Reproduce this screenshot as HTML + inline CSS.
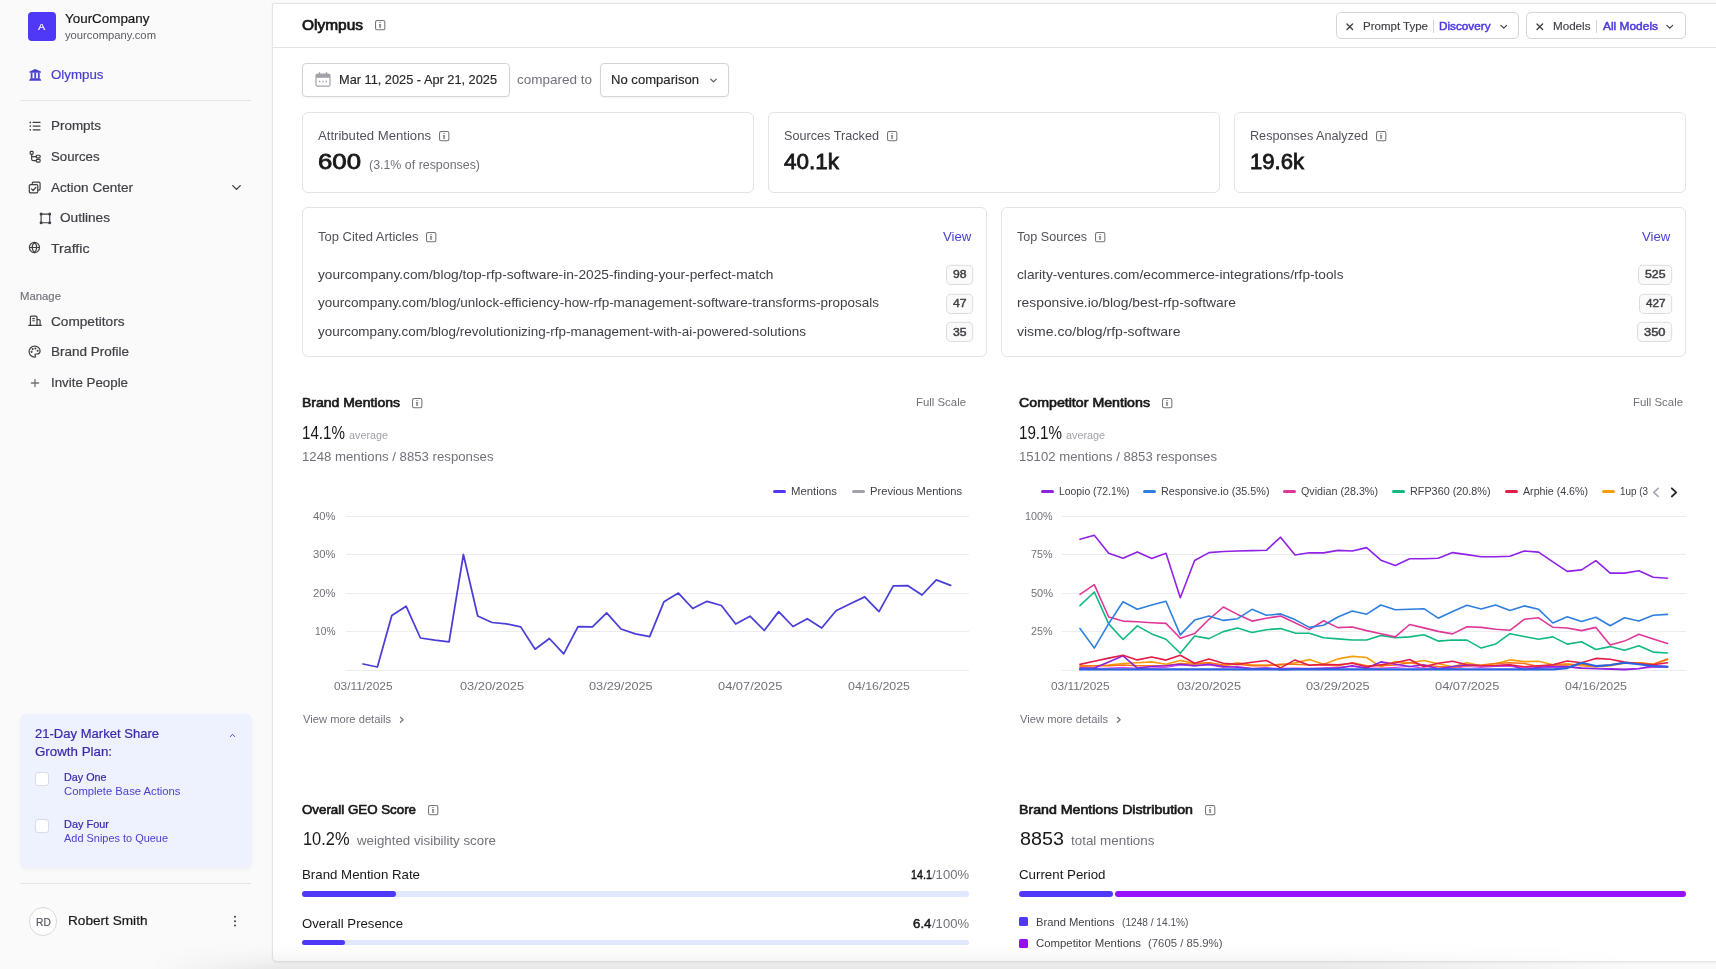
<!DOCTYPE html>
<html lang="en"><head><meta charset="utf-8"><title>Olympus</title>
<style>
html,body{margin:0;padding:0;}
html{overflow:hidden;width:1716px;height:969px;}
body{width:1716px;height:969px;overflow:hidden;position:relative;background:#fafafa;font-family:"Liberation Sans", sans-serif;-webkit-font-smoothing:antialiased;}
.b{position:absolute;box-sizing:border-box;}
.t{position:absolute;white-space:nowrap;line-height:20px;height:20px;}
svg{position:absolute;overflow:visible;}
</style></head><body>
<div class="b" style="left:0px;top:0px;width:1716px;height:969px;background:#fafafa;"></div>
<div class="b" style="left:272px;top:3px;width:1460px;height:958.5px;background:#ffffff;border:1px solid #e4e4e7;border-radius:2px 0 0 5px;box-shadow:0 1px 3px rgba(0,0,0,0.05);"></div>
<div class="b" style="left:273px;top:47px;width:1443px;height:1px;background:#e4e4e7;"></div>
<div class="b" style="left:28px;top:12px;width:28px;height:28.5px;background:#4f39f6;border-radius:4px;"></div>
<svg style="left:28.6px;top:68.8px" width="12.4" height="11.7" viewBox="0 0 12.4 11.7" fill="#4a3fd0"><path d="M6.200 0L11.9 2.400v1.400H0.500V2.400z"/><rect x="1.700" y="3.800" width="1.800" height="5.400"/><rect x="5.300" y="3.800" width="1.800" height="5.400"/><rect x="8.900" y="3.800" width="1.800" height="5.400"/><path d="M1.300 9.200h9.800l1.300 2.500H0z"/></svg>
<div class="b" style="left:20px;top:100px;width:231px;height:1px;background:#e4e4e7;"></div>
<svg style="left:29px;top:120px" width="12" height="12" viewBox="0 0 12 12" fill="none" stroke="#3f3f46" stroke-width="1.3" stroke-linecap="round" stroke-linejoin="round"><path d="M4.200 2.400h6.800M4.200 6.100h6.800M4.200 9.800h6.800"/><path d="M1.300 2.400h.01M1.300 6.100h.01M1.300 9.800h.01" stroke-width="1.700"/></svg>
<svg style="left:29px;top:150px" width="12" height="13" viewBox="0 0 12 13" fill="none" stroke="#3f3f46" stroke-width="1.2" stroke-linecap="round" stroke-linejoin="round"><rect x="1.200" y="1.400" width="2.900" height="2.900" rx="0.8"/><path d="M2.650 4.300v4.600c0 1.200.6 1.800 1.800 1.800h2.800"/><path d="M2.650 6.650h4.600"/><rect x="7.300" y="5.250" width="3.800" height="2.700" rx="0.8"/><rect x="7.300" y="9.300" width="3.800" height="2.800" rx="0.8"/></svg>
<svg style="left:28.1px;top:180.8px" width="12.6" height="12.6" viewBox="0 0 12.6 12.6" fill="none" stroke="#3f3f46" stroke-width="1.2" stroke-linecap="round" stroke-linejoin="round"><rect x="1.300" y="3.600" width="8.500" height="8.300" rx="1.300"/><path d="M3.500 7.900l1.600 1.600 2.800-3"/><path d="M4.200 3.400V2.500c0-.8.500-1.300 1.300-1.300h5.300c.8 0 1.300.5 1.300 1.300v5.300c0 .8-.5 1.300-1.300 1.300h-.9"/></svg>
<svg style="left:229px;top:180px" width="15" height="15" viewBox="0 0 24 24" fill="none" stroke="#3f3f46" stroke-width="2.2" stroke-linecap="round" stroke-linejoin="round" ><path d="m6 9 6 6 6-6"/></svg>
<svg style="left:38.5px;top:211.5px" width="13" height="13" viewBox="0 0 13 13" fill="none" stroke="#3f3f46" stroke-width="1.2" stroke-linecap="round" stroke-linejoin="round"><rect x="2.100" y="2.100" width="8.600" height="8.600" stroke-width="1.150"/><circle cx="2.100" cy="2.100" r="1.500" fill="#3f3f46" stroke="none"/><circle cx="10.7" cy="2.100" r="1.500" fill="#3f3f46" stroke="none"/><circle cx="2.100" cy="10.7" r="1.500" fill="#3f3f46" stroke="none"/><circle cx="10.7" cy="10.7" r="1.500" fill="#3f3f46" stroke="none"/></svg>
<svg style="left:28.1px;top:241.4px" width="13" height="13" viewBox="0 0 13 13" fill="none" stroke="#3f3f46" stroke-width="1.2" stroke-linecap="round" stroke-linejoin="round"><circle cx="6.450" cy="6.500" r="5.050"/><path d="M6.450 1.450c-3 3-3 7.100 0 10.1c3-3 3-7.100 0-10.100"/><path d="M1.400 6.500h10.1"/></svg>
<svg style="left:28px;top:315px" width="14" height="12" viewBox="0 0 14 12" fill="none" stroke="#3f3f46" stroke-width="1.2" stroke-linecap="round" stroke-linejoin="round"><path d="M0.700 10.3h12.6"/><path d="M2.400 10.3V2.200c0-.7.400-1.100 1.100-1.100h4.400c.7 0 1.100.4 1.100 1.100v8.100"/><path d="M9.200 4.700h1.800c.7 0 1.100.4 1.100 1.100v4.500"/><path d="M4.700 3.600h1.700M4.700 5.800h1.700" stroke-width="1.100"/></svg>
<svg style="left:28.4px;top:345.3px" width="13.2" height="13.2" viewBox="0 0 24 24" fill="none" stroke="#3f3f46" stroke-width="2.150" stroke-linecap="round" stroke-linejoin="round"><circle cx="13.5" cy="6.500" r=".8" fill="#3f3f46"/><circle cx="17.5" cy="10.5" r=".8" fill="#3f3f46"/><circle cx="8.500" cy="7.500" r=".8" fill="#3f3f46"/><circle cx="6.500" cy="12.5" r=".8" fill="#3f3f46"/><path d="M12 2C6.500 2 2 6.500 2 12s4.500 10 10 10c.926 0 1.648-.746 1.648-1.688 0-.437-.18-.835-.437-1.125-.29-.289-.438-.652-.438-1.125a1.640 1.640 0 0 1 1.668-1.668h1.996c3.051 0 5.555-2.503 5.555-5.554C21.965 6.012 17.461 2 12 2z"/></svg>
<svg style="left:30px;top:377.9px" width="10" height="10" viewBox="0 0 10 10" fill="none" stroke="#71717a" stroke-width="1.3" stroke-linecap="round" stroke-linejoin="round"><path d="M1.400 5h7.200M5 1.400v7.200"/></svg>
<div class="b" style="left:20px;top:714px;width:232px;height:154px;background:#eef2ff;border-radius:6px;box-shadow:0 2px 4px rgba(0,0,0,0.035);"></div>
<svg style="left:227.5px;top:731px" width="9" height="9" viewBox="0 0 24 24" fill="none" stroke="#4f46b8" stroke-width="2.6" stroke-linecap="round" stroke-linejoin="round" ><path d="m6 15 6-6 6 6"/></svg>
<div class="b" style="left:35px;top:772px;width:14px;height:14px;background:#ffffff;border:1px solid #d9dbe6;border-radius:3px;"></div>
<div class="b" style="left:35px;top:819px;width:14px;height:14px;background:#ffffff;border:1px solid #d9dbe6;border-radius:3px;"></div>
<div class="b" style="left:20px;top:883px;width:231px;height:1px;background:#e4e4e7;"></div>
<div class="b" style="left:29px;top:907.2px;width:27.8px;height:28.4px;background:#ffffff;border:1px solid #d9d9dd;border-radius:14.2px;"></div>
<svg style="left:233px;top:915px" width="4" height="13" viewBox="0 0 4 13"><circle cx="2" cy="1.800" r="1" fill="#3f3f46"/><circle cx="2" cy="6.200" r="1" fill="#3f3f46"/><circle cx="2" cy="10.6" r="1" fill="#3f3f46"/></svg>
<svg style="left:375.1px;top:20.2px" width="10.4" height="10.4" viewBox="0 0 10.4 10.4" fill="none"><rect x="0.550" y="0.550" width="9.300" height="9.300" rx="1.600" stroke="#737378" stroke-width="1.050"/><rect x="4" y="2.150" width="2.200" height="0.800" rx="0.300" fill="#8a8a90"/><rect x="4.100" y="4" width="2" height="4" rx="0.400" fill="#9a9aa0"/><rect x="4" y="4" width="1.200" height="1.300" rx="0.300" fill="#77777c"/></svg>
<div class="b" style="left:1336px;top:12px;width:182.5px;height:26.5px;background:#ffffff;border:1px solid #d4d4d8;border-radius:5px;"></div>
<svg style="left:1346.2px;top:22.6px" width="7.6" height="7.6" viewBox="0 0 7.6 7.6" fill="none" stroke="#3f3f46" stroke-width="1.35" stroke-linecap="round" stroke-linejoin="round"><path d="M1 1l5.600 5.600M6.600 1L1 6.600"/></svg>
<div class="b" style="left:1433px;top:19.5px;width:1px;height:13.5px;background:#d4d4d8;"></div>
<svg style="left:1497.5px;top:20.6px" width="11.5" height="11.5" viewBox="0 0 24 24" fill="none" stroke="#3f3f46" stroke-width="2.5" stroke-linecap="round" stroke-linejoin="round" ><path d="m6 9 6 6 6-6"/></svg>
<div class="b" style="left:1526px;top:12px;width:159.5px;height:26.5px;background:#ffffff;border:1px solid #d4d4d8;border-radius:5px;"></div>
<svg style="left:1536.2px;top:22.6px" width="7.6" height="7.6" viewBox="0 0 7.6 7.6" fill="none" stroke="#3f3f46" stroke-width="1.35" stroke-linecap="round" stroke-linejoin="round"><path d="M1 1l5.600 5.600M6.600 1L1 6.600"/></svg>
<div class="b" style="left:1596px;top:19.5px;width:1px;height:13.5px;background:#d4d4d8;"></div>
<svg style="left:1663.5px;top:20.6px" width="11.5" height="11.5" viewBox="0 0 24 24" fill="none" stroke="#3f3f46" stroke-width="2.5" stroke-linecap="round" stroke-linejoin="round" ><path d="m6 9 6 6 6-6"/></svg>
<div class="b" style="left:302px;top:63px;width:208px;height:34px;background:#ffffff;border:1px solid #d4d4d8;border-radius:4px;box-shadow:0 1px 2px rgba(0,0,0,0.05);"></div>
<svg style="left:315px;top:72px" width="16" height="15" viewBox="0 0 16 15" fill="none"><rect x="1" y="2.200" width="14" height="12" rx="1.5" stroke="#a1a1aa" stroke-width="1.2"/><rect x="1" y="2.200" width="14" height="3.600" fill="#a1a1aa"/><path d="M4.500 0.600v2.500M11.5 0.600v2.500" stroke="#a1a1aa" stroke-width="1.3" stroke-linecap="round"/><path d="M4 9.500h1.400M7.300 9.500h1.400M10.6 9.500h1.400" stroke="#a1a1aa" stroke-width="1.3"/></svg>
<div class="b" style="left:600px;top:63px;width:128.5px;height:34px;background:#ffffff;border:1px solid #d4d4d8;border-radius:4px;box-shadow:0 1px 2px rgba(0,0,0,0.05);"></div>
<svg style="left:708px;top:74.5px" width="11" height="11" viewBox="0 0 24 24" fill="none" stroke="#52525b" stroke-width="2.4" stroke-linecap="round" stroke-linejoin="round" ><path d="m6 9 6 6 6-6"/></svg>
<div class="b" style="left:302px;top:112px;width:452px;height:80.5px;background:#ffffff;border:1px solid #e4e4e7;border-radius:6px;"></div>
<svg style="left:439px;top:131px" width="10.4" height="10.4" viewBox="0 0 10.4 10.4" fill="none"><rect x="0.550" y="0.550" width="9.300" height="9.300" rx="1.600" stroke="#737378" stroke-width="1.050"/><rect x="4" y="2.150" width="2.200" height="0.800" rx="0.300" fill="#8a8a90"/><rect x="4.100" y="4" width="2" height="4" rx="0.400" fill="#9a9aa0"/><rect x="4" y="4" width="1.200" height="1.300" rx="0.300" fill="#77777c"/></svg>
<div class="b" style="left:768px;top:112px;width:452px;height:80.5px;background:#ffffff;border:1px solid #e4e4e7;border-radius:6px;"></div>
<svg style="left:887px;top:131px" width="10.4" height="10.4" viewBox="0 0 10.4 10.4" fill="none"><rect x="0.550" y="0.550" width="9.300" height="9.300" rx="1.600" stroke="#737378" stroke-width="1.050"/><rect x="4" y="2.150" width="2.200" height="0.800" rx="0.300" fill="#8a8a90"/><rect x="4.100" y="4" width="2" height="4" rx="0.400" fill="#9a9aa0"/><rect x="4" y="4" width="1.200" height="1.300" rx="0.300" fill="#77777c"/></svg>
<div class="b" style="left:1234px;top:112px;width:452px;height:80.5px;background:#ffffff;border:1px solid #e4e4e7;border-radius:6px;"></div>
<svg style="left:1376px;top:131px" width="10.4" height="10.4" viewBox="0 0 10.4 10.4" fill="none"><rect x="0.550" y="0.550" width="9.300" height="9.300" rx="1.600" stroke="#737378" stroke-width="1.050"/><rect x="4" y="2.150" width="2.200" height="0.800" rx="0.300" fill="#8a8a90"/><rect x="4.100" y="4" width="2" height="4" rx="0.400" fill="#9a9aa0"/><rect x="4" y="4" width="1.200" height="1.300" rx="0.300" fill="#77777c"/></svg>
<div class="b" style="left:302px;top:207px;width:685px;height:149.5px;background:#ffffff;border:1px solid #e4e4e7;border-radius:6px;"></div>
<svg style="left:426.0px;top:232px" width="10.4" height="10.4" viewBox="0 0 10.4 10.4" fill="none"><rect x="0.550" y="0.550" width="9.300" height="9.300" rx="1.600" stroke="#737378" stroke-width="1.050"/><rect x="4" y="2.150" width="2.200" height="0.800" rx="0.300" fill="#8a8a90"/><rect x="4.100" y="4" width="2" height="4" rx="0.400" fill="#9a9aa0"/><rect x="4" y="4" width="1.200" height="1.300" rx="0.300" fill="#77777c"/></svg>
<svg style="left:945.2px;top:264.3px" width="28.5" height="22" viewBox="0 0 28.5 22"><rect x="1.5" y="1.300" width="26.2" height="19.2" rx="4.200" fill="#fafafa" stroke="#dcdce0" stroke-width="1"/></svg>
<svg style="left:945.2px;top:292.7px" width="28.5" height="22" viewBox="0 0 28.5 22"><rect x="1.5" y="1.300" width="26.2" height="19.2" rx="4.200" fill="#fafafa" stroke="#dcdce0" stroke-width="1"/></svg>
<svg style="left:945.2px;top:321.3px" width="28.5" height="22" viewBox="0 0 28.5 22"><rect x="1.5" y="1.300" width="26.2" height="19.2" rx="4.200" fill="#fafafa" stroke="#dcdce0" stroke-width="1"/></svg>
<div class="b" style="left:1001px;top:207px;width:684.5px;height:149.5px;background:#ffffff;border:1px solid #e4e4e7;border-radius:6px;"></div>
<svg style="left:1094.5px;top:232px" width="10.4" height="10.4" viewBox="0 0 10.4 10.4" fill="none"><rect x="0.550" y="0.550" width="9.300" height="9.300" rx="1.600" stroke="#737378" stroke-width="1.050"/><rect x="4" y="2.150" width="2.200" height="0.800" rx="0.300" fill="#8a8a90"/><rect x="4.100" y="4" width="2" height="4" rx="0.400" fill="#9a9aa0"/><rect x="4" y="4" width="1.200" height="1.300" rx="0.300" fill="#77777c"/></svg>
<svg style="left:1636.7px;top:264.3px" width="35.5" height="22" viewBox="0 0 35.5 22"><rect x="1.5" y="1.300" width="33.2" height="19.2" rx="4.200" fill="#fafafa" stroke="#dcdce0" stroke-width="1"/></svg>
<svg style="left:1637.7px;top:292.7px" width="34.5" height="22" viewBox="0 0 34.5 22"><rect x="1.5" y="1.300" width="32.2" height="19.2" rx="4.200" fill="#fafafa" stroke="#dcdce0" stroke-width="1"/></svg>
<svg style="left:1635.7px;top:321.3px" width="36.5" height="22" viewBox="0 0 36.5 22"><rect x="1.5" y="1.300" width="34.2" height="19.2" rx="4.200" fill="#fafafa" stroke="#dcdce0" stroke-width="1"/></svg>
<svg style="left:411.7px;top:397.5px" width="10.4" height="10.4" viewBox="0 0 10.4 10.4" fill="none"><rect x="0.550" y="0.550" width="9.300" height="9.300" rx="1.600" stroke="#737378" stroke-width="1.050"/><rect x="4" y="2.150" width="2.200" height="0.800" rx="0.300" fill="#8a8a90"/><rect x="4.100" y="4" width="2" height="4" rx="0.400" fill="#9a9aa0"/><rect x="4" y="4" width="1.200" height="1.300" rx="0.300" fill="#77777c"/></svg>
<svg style="left:398.8px;top:716px" width="6" height="8" viewBox="0 0 6 8" fill="none" stroke="#71717a" stroke-width="1.15" stroke-linecap="round" stroke-linejoin="round"><path d="M1.400 1.300L4.200 3.800L1.400 6.300"/></svg>
<div class="b" style="left:773px;top:490px;width:13px;height:3.2px;background:#4f39f6;border-radius:1.6px;"></div>
<div class="b" style="left:852.2px;top:490px;width:13px;height:3.2px;background:#a1a1aa;border-radius:1.6px;"></div>
<div class="b" style="left:345.7px;top:515.8px;width:623.0px;height:1.2px;background:#ebebf0;"></div>
<div class="b" style="left:345.7px;top:554.1px;width:623.0px;height:1.2px;background:#ebebf0;"></div>
<div class="b" style="left:345.7px;top:592.5px;width:623.0px;height:1.2px;background:#ebebf0;"></div>
<div class="b" style="left:345.7px;top:630.9px;width:623.0px;height:1.2px;background:#ebebf0;"></div>
<div class="b" style="left:345.7px;top:669.5px;width:623.0px;height:1.2px;background:#ebebf0;"></div>
<svg style="left:0;top:0" width="1716" height="969" viewBox="0 0 1716 969" fill="none"><polyline points="363.1,664.0 377.4,667.0 391.8,615.4 406.1,606.2 420.4,638.0 434.8,640.1 449.1,641.8 463.4,554.5 477.7,616.0 492.1,622.5 506.4,623.8 520.7,626.9 535.1,649.2 549.4,638.5 563.7,653.8 578.0,626.7 592.4,626.9 606.7,612.9 621.0,629.0 635.4,633.8 649.7,636.6 664.0,601.7 678.4,593.1 692.7,608.5 707.0,601.3 721.4,605.5 735.7,624.0 750.0,616.2 764.3,630.5 778.7,611.6 793.0,626.5 807.3,618.7 821.7,628.0 836.0,610.8 850.3,603.8 864.7,596.9 879.0,611.6 893.3,585.8 907.6,585.6 922.0,595.0 936.3,579.9 950.6,585.4" stroke="#4a3ed8" stroke-width="1.75" stroke-linejoin="round" stroke-linecap="round"/></svg>
<svg style="left:1161.7px;top:397.5px" width="10.4" height="10.4" viewBox="0 0 10.4 10.4" fill="none"><rect x="0.550" y="0.550" width="9.300" height="9.300" rx="1.600" stroke="#737378" stroke-width="1.050"/><rect x="4" y="2.150" width="2.200" height="0.800" rx="0.300" fill="#8a8a90"/><rect x="4.100" y="4" width="2" height="4" rx="0.400" fill="#9a9aa0"/><rect x="4" y="4" width="1.200" height="1.300" rx="0.300" fill="#77777c"/></svg>
<svg style="left:1115.8px;top:716px" width="6" height="8" viewBox="0 0 6 8" fill="none" stroke="#71717a" stroke-width="1.15" stroke-linecap="round" stroke-linejoin="round"><path d="M1.400 1.300L4.200 3.800L1.400 6.300"/></svg>
<div class="b" style="left:1041px;top:490px;width:13px;height:3.2px;background:#8b22e0;border-radius:1.6px;"></div>
<div class="b" style="left:1143px;top:490px;width:13px;height:3.2px;background:#2f7fe0;border-radius:1.6px;"></div>
<div class="b" style="left:1283px;top:490px;width:13px;height:3.2px;background:#e0389a;border-radius:1.6px;"></div>
<div class="b" style="left:1391.8px;top:490px;width:13px;height:3.2px;background:#10b981;border-radius:1.6px;"></div>
<div class="b" style="left:1505px;top:490px;width:13px;height:3.2px;background:#e11d48;border-radius:1.6px;"></div>
<div class="b" style="left:1601.7px;top:490px;width:13px;height:3.2px;background:#f59e0b;border-radius:1.6px;"></div>
<div class="b" style="left:1646.7px;top:482px;width:40px;height:18px;background:#ffffff;"></div>
<svg style="left:1652px;top:486.8px" width="8" height="11" viewBox="0 0 8 11" fill="none" stroke="#a1a1aa" stroke-width="1.5" stroke-linecap="round" stroke-linejoin="round"><path d="M6.200 1.300L1.800 5.400L6.200 9.500"/></svg>
<svg style="left:1670px;top:486.8px" width="8" height="11" viewBox="0 0 8 11" fill="none" stroke="#27272a" stroke-width="1.8" stroke-linecap="round" stroke-linejoin="round"><path d="M1.800 1.300L6.200 5.400L1.800 9.500"/></svg>
<div class="b" style="left:1061.8px;top:515.8px;width:624.2px;height:1.2px;background:#ebebf0;"></div>
<div class="b" style="left:1061.8px;top:554.1px;width:624.2px;height:1.2px;background:#ebebf0;"></div>
<div class="b" style="left:1061.8px;top:592.5px;width:624.2px;height:1.2px;background:#ebebf0;"></div>
<div class="b" style="left:1061.8px;top:630.9px;width:624.2px;height:1.2px;background:#ebebf0;"></div>
<div class="b" style="left:1061.8px;top:669.5px;width:624.2px;height:1.2px;background:#ebebf0;"></div>
<svg style="left:0;top:0" width="1716" height="969" viewBox="0 0 1716 969" fill="none"><polyline points="1080.0,668.1 1094.3,668.4 1108.7,668.1 1123.0,667.3 1137.3,668.4 1151.7,668.1 1166.0,667.3 1180.3,665.0 1194.6,665.8 1209.0,665.0 1223.3,667.3 1237.6,666.5 1252.0,668.4 1266.3,668.1 1280.6,668.4 1295.0,668.1 1309.3,668.4 1323.6,668.1 1337.9,667.3 1352.3,666.5 1366.6,668.1 1380.9,668.1 1395.3,667.3 1409.6,666.5 1423.9,668.1 1438.2,668.1 1452.6,668.4 1466.9,666.5 1481.2,667.3 1495.6,666.5 1509.9,666.5 1524.2,667.3 1538.6,668.4 1552.9,667.3 1567.2,667.3 1581.5,668.1 1595.9,668.4 1610.2,668.7 1624.5,669.0 1638.9,668.4 1653.2,667.3 1667.5,667.3" stroke="#d946ef" stroke-width="1.2" stroke-linejoin="round" stroke-linecap="round"/></svg>
<svg style="left:0;top:0" width="1716" height="969" viewBox="0 0 1716 969" fill="none"><polyline points="1080.0,665.8 1094.3,665.8 1108.7,665.0 1123.0,663.5 1137.3,662.7 1151.7,661.9 1166.0,664.2 1180.3,660.4 1194.6,663.5 1209.0,662.7 1223.3,665.8 1237.6,662.7 1252.0,665.0 1266.3,665.0 1280.6,665.0 1295.0,662.7 1309.3,659.6 1323.6,664.2 1337.9,658.9 1352.3,656.4 1366.6,657.5 1380.9,666.8 1395.3,661.6 1409.6,662.7 1423.9,660.5 1438.2,663.8 1452.6,666.8 1466.9,662.7 1481.2,665.8 1495.6,663.8 1509.9,659.9 1524.2,661.6 1538.6,661.2 1552.9,664.8 1567.2,663.8 1581.5,665.8 1595.9,666.8 1610.2,665.8 1624.5,663.3 1638.9,662.7 1653.2,664.4 1667.5,659.5" stroke="#f59e0b" stroke-width="1.6" stroke-linejoin="round" stroke-linecap="round"/></svg>
<svg style="left:0;top:0" width="1716" height="969" viewBox="0 0 1716 969" fill="none"><polyline points="1080.0,666.5 1094.3,665.8 1108.7,665.8 1123.0,665.0 1137.3,665.8 1151.7,665.8 1166.0,665.8 1180.3,663.5 1194.6,664.2 1209.0,662.7 1223.3,665.0 1237.6,664.2 1252.0,665.8 1266.3,665.8 1280.6,664.2 1295.0,664.2 1309.3,665.0 1323.6,665.0 1337.9,665.8 1352.3,662.7 1366.6,665.8 1380.9,665.8 1395.3,665.0 1409.6,662.7 1423.9,665.0 1438.2,666.5 1452.6,667.3 1466.9,665.8 1481.2,665.0 1495.6,663.5 1509.9,662.7 1524.2,663.5 1538.6,666.5 1552.9,665.0 1567.2,665.0 1581.5,664.2 1595.9,666.5 1610.2,665.0 1624.5,662.7 1638.9,662.7 1653.2,664.2 1667.5,658.9" stroke="#f97316" stroke-width="1.6" stroke-linejoin="round" stroke-linecap="round"/></svg>
<svg style="left:0;top:0" width="1716" height="969" viewBox="0 0 1716 969" fill="none"><polyline points="1080.0,668.1 1094.3,668.1 1108.7,661.9 1123.0,655.8 1137.3,668.1 1151.7,666.5 1166.0,665.8 1180.3,664.2 1194.6,665.8 1209.0,664.2 1223.3,666.5 1237.6,667.3 1252.0,668.8 1266.3,668.1 1280.6,669.6 1295.0,669.1 1309.3,668.8 1323.6,668.4 1337.9,668.1 1352.3,665.8 1366.6,668.1 1380.9,661.9 1395.3,664.2 1409.6,666.5 1423.9,665.0 1438.2,668.8 1452.6,666.5 1466.9,665.0 1481.2,665.8 1495.6,665.8 1509.9,665.0 1524.2,669.6 1538.6,667.3 1552.9,666.5 1567.2,666.5 1581.5,668.1 1595.9,668.8 1610.2,669.1 1624.5,669.6 1638.9,668.8 1653.2,665.8 1667.5,666.5" stroke="#8b22e0" stroke-width="1.6" stroke-linejoin="round" stroke-linecap="round"/></svg>
<svg style="left:0;top:0" width="1716" height="969" viewBox="0 0 1716 969" fill="none"><polyline points="1080.0,664.4 1094.3,661.2 1108.7,658.1 1123.0,655.3 1137.3,659.9 1151.7,657.0 1166.0,660.1 1180.3,655.3 1194.6,663.3 1209.0,658.9 1223.3,663.2 1237.6,664.4 1252.0,662.2 1266.3,660.5 1280.6,667.9 1295.0,659.9 1309.3,665.2 1323.6,664.4 1337.9,664.8 1352.3,663.2 1366.6,666.8 1380.9,664.8 1395.3,662.7 1409.6,659.5 1423.9,666.8 1438.2,663.3 1452.6,661.2 1466.9,664.8 1481.2,665.8 1495.6,665.5 1509.9,664.8 1524.2,666.8 1538.6,665.8 1552.9,664.8 1567.2,661.0 1581.5,662.7 1595.9,658.4 1610.2,659.2 1624.5,662.1 1638.9,663.8 1653.2,664.8 1667.5,662.7" stroke="#e11d48" stroke-width="1.6" stroke-linejoin="round" stroke-linecap="round"/></svg>
<svg style="left:0;top:0" width="1716" height="969" viewBox="0 0 1716 969" fill="none"><polyline points="1080.0,669.4 1094.3,669.4 1108.7,669.4 1123.0,669.4 1137.3,669.4 1151.7,669.4 1166.0,669.4 1180.3,669.4 1194.6,669.4 1209.0,669.4 1223.3,669.4 1237.6,669.4 1252.0,669.4 1266.3,669.4 1280.6,669.4 1295.0,669.4 1309.3,669.4 1323.6,669.4 1337.9,669.4 1352.3,669.4 1366.6,669.4 1380.9,669.4 1395.3,669.4 1409.6,669.4 1423.9,669.4 1438.2,669.4 1452.6,669.4 1466.9,669.4 1481.2,669.4 1495.6,669.4 1509.9,669.4 1524.2,669.4 1538.6,669.4 1552.9,669.4 1567.2,668.1 1581.5,662.7 1595.9,666.1 1610.2,665.0 1624.5,662.7 1638.9,664.2 1653.2,666.2 1667.5,666.8" stroke="#2a62e0" stroke-width="2.1" stroke-linejoin="round" stroke-linecap="round"/></svg>
<svg style="left:0;top:0" width="1716" height="969" viewBox="0 0 1716 969" fill="none"><polyline points="1080.0,605.6 1094.3,592.0 1108.7,623.9 1123.0,639.5 1137.3,625.9 1151.7,633.9 1166.0,639.2 1180.3,653.2 1194.6,636.0 1209.0,638.6 1223.3,631.6 1237.6,628.0 1252.0,632.5 1266.3,629.7 1280.6,628.6 1295.0,633.1 1309.3,633.2 1323.6,637.8 1337.9,638.9 1352.3,640.0 1366.6,640.0 1380.9,635.4 1395.3,637.8 1409.6,636.9 1423.9,634.8 1438.2,641.1 1452.6,640.0 1466.9,640.1 1481.2,648.1 1495.6,644.1 1509.9,633.7 1524.2,636.5 1538.6,639.2 1552.9,636.9 1567.2,644.1 1581.5,641.7 1595.9,649.5 1610.2,646.6 1624.5,650.3 1638.9,645.8 1653.2,652.1 1667.5,653.0" stroke="#10b981" stroke-width="1.6" stroke-linejoin="round" stroke-linecap="round"/></svg>
<svg style="left:0;top:0" width="1716" height="969" viewBox="0 0 1716 969" fill="none"><polyline points="1080.0,594.4 1094.3,584.6 1108.7,617.0 1123.0,621.1 1137.3,621.7 1151.7,622.7 1166.0,623.4 1180.3,638.2 1194.6,633.6 1209.0,619.3 1223.3,607.0 1237.6,614.4 1252.0,621.1 1266.3,618.2 1280.6,616.1 1295.0,622.8 1309.3,629.6 1323.6,620.7 1337.9,627.6 1352.3,627.0 1366.6,630.6 1380.9,633.7 1395.3,636.9 1409.6,624.5 1423.9,627.9 1438.2,631.4 1452.6,633.9 1466.9,626.8 1481.2,627.4 1495.6,629.3 1509.9,630.3 1524.2,619.3 1538.6,617.8 1552.9,627.3 1567.2,628.0 1581.5,630.6 1595.9,627.4 1610.2,644.9 1624.5,641.1 1638.9,634.2 1653.2,638.9 1667.5,643.4" stroke="#e0389a" stroke-width="1.6" stroke-linejoin="round" stroke-linecap="round"/></svg>
<svg style="left:0;top:0" width="1716" height="969" viewBox="0 0 1716 969" fill="none"><polyline points="1080.0,628.5 1094.3,648.1 1108.7,623.6 1123.0,601.8 1137.3,609.3 1151.7,605.0 1166.0,601.2 1180.3,634.9 1194.6,620.1 1209.0,616.1 1223.3,620.4 1237.6,618.7 1252.0,609.3 1266.3,615.3 1280.6,613.9 1295.0,619.6 1309.3,627.4 1323.6,625.3 1337.9,617.0 1352.3,611.0 1366.6,614.2 1380.9,605.0 1395.3,609.8 1409.6,609.3 1423.9,608.7 1438.2,618.2 1452.6,611.5 1466.9,605.3 1481.2,609.0 1495.6,605.0 1509.9,610.4 1524.2,605.9 1538.6,609.3 1552.9,623.0 1567.2,616.7 1581.5,621.6 1595.9,617.3 1610.2,625.7 1624.5,617.8 1638.9,621.0 1653.2,615.3 1667.5,614.4" stroke="#2f7fe0" stroke-width="1.6" stroke-linejoin="round" stroke-linecap="round"/></svg>
<svg style="left:0;top:0" width="1716" height="969" viewBox="0 0 1716 969" fill="none"><polyline points="1080.0,539.2 1094.3,535.2 1108.7,553.2 1123.0,558.2 1137.3,551.9 1151.7,558.5 1166.0,553.3 1180.3,597.7 1194.6,560.5 1209.0,552.6 1223.3,551.5 1237.6,551.0 1252.0,550.6 1266.3,550.3 1280.6,537.2 1295.0,555.0 1309.3,552.7 1323.6,552.9 1337.9,550.4 1352.3,551.0 1366.6,547.6 1380.9,560.2 1395.3,565.4 1409.6,558.8 1423.9,558.8 1438.2,558.2 1452.6,552.6 1466.9,554.6 1481.2,556.7 1495.6,556.7 1509.9,556.2 1524.2,551.0 1538.6,552.1 1552.9,561.9 1567.2,571.4 1581.5,569.9 1595.9,560.7 1610.2,573.1 1624.5,573.1 1638.9,570.8 1653.2,577.3 1667.5,578.3" stroke="#9021e6" stroke-width="1.6" stroke-linejoin="round" stroke-linecap="round"/></svg>
<svg style="left:428px;top:805.2px" width="10.4" height="10.4" viewBox="0 0 10.4 10.4" fill="none"><rect x="0.550" y="0.550" width="9.300" height="9.300" rx="1.600" stroke="#737378" stroke-width="1.050"/><rect x="4" y="2.150" width="2.200" height="0.800" rx="0.300" fill="#8a8a90"/><rect x="4.100" y="4" width="2" height="4" rx="0.400" fill="#9a9aa0"/><rect x="4" y="4" width="1.200" height="1.300" rx="0.300" fill="#77777c"/></svg>
<div class="b" style="left:302px;top:891px;width:667px;height:6px;background:#e0e7ff;border-radius:3px;"></div>
<div class="b" style="left:302px;top:891px;width:93.5px;height:6px;background:#4f39f6;border-radius:3px;"></div>
<div class="b" style="left:302px;top:939.8px;width:667px;height:5.4px;background:#e0e7ff;border-radius:2.7px;"></div>
<div class="b" style="left:302px;top:939.8px;width:43px;height:5.4px;background:#4f39f6;border-radius:2.7px;"></div>
<svg style="left:1204.5px;top:804.5px" width="10.4" height="10.4" viewBox="0 0 10.4 10.4" fill="none"><rect x="0.550" y="0.550" width="9.300" height="9.300" rx="1.600" stroke="#737378" stroke-width="1.050"/><rect x="4" y="2.150" width="2.200" height="0.800" rx="0.300" fill="#8a8a90"/><rect x="4.100" y="4" width="2" height="4" rx="0.400" fill="#9a9aa0"/><rect x="4" y="4" width="1.200" height="1.300" rx="0.300" fill="#77777c"/></svg>
<div class="b" style="left:1019px;top:890.5px;width:93.5px;height:6.5px;background:#4f39f6;border-radius:3.25px;"></div>
<div class="b" style="left:1115px;top:890.5px;width:571px;height:6.5px;background:#9810fa;border-radius:3.25px;"></div>
<div class="b" style="left:1019px;top:917px;width:9px;height:9px;background:#4f39f6;border-radius:1.5px;"></div>
<div class="b" style="left:1019px;top:938.5px;width:9px;height:9px;background:#9810fa;border-radius:1.5px;"></div>
<div class="b" style="left:150px;top:942px;width:1490px;height:27px;background:linear-gradient(to bottom, rgba(0,0,0,0) 0%, rgba(0,0,0,0.012) 35%, rgba(0,0,0,0.04) 70%, rgba(0,0,0,0.07) 100%);-webkit-mask-image:linear-gradient(to right, transparent 0%, #000 9%, #000 78%, transparent 100%);mask-image:linear-gradient(to right, transparent 0%, #000 9%, #000 78%, transparent 100%);"></div>
<span class="t" style="left:38.40px;top:17px;font-size:9.62px;color:#ffffff;-webkit-text-stroke:0.2px #ffffff;transform:scaleX(1.1212);transform-origin:0 50%;">A</span>
<span class="t" style="left:65.00px;top:9px;font-size:12.49px;color:#18181b;-webkit-text-stroke:0.2px #18181b;transform:scaleX(1.0743);transform-origin:0 50%;">YourCompany</span>
<span class="t" style="left:65.00px;top:25px;font-size:10.64px;color:#5a5a62;transform:scaleX(1.0578);transform-origin:0 50%;">yourcompany.com</span>
<span class="t" style="left:51.00px;top:65px;font-size:12.49px;color:#4a3fd0;-webkit-text-stroke:0.2px #4a3fd0;transform:scaleX(1.0657);transform-origin:0 50%;">Olympus</span>
<span class="t" style="left:51.00px;top:116px;font-size:12.49px;color:#3f3f46;-webkit-text-stroke:0.2px #3f3f46;transform:scaleX(1.0756);transform-origin:0 50%;">Prompts</span>
<span class="t" style="left:51.00px;top:147px;font-size:12.49px;color:#3f3f46;-webkit-text-stroke:0.2px #3f3f46;transform:scaleX(1.0587);transform-origin:0 50%;">Sources</span>
<span class="t" style="left:51.00px;top:178px;font-size:12.49px;color:#3f3f46;-webkit-text-stroke:0.2px #3f3f46;transform:scaleX(1.0841);transform-origin:0 50%;">Action Center</span>
<span class="t" style="left:60.00px;top:208px;font-size:12.49px;color:#3f3f46;-webkit-text-stroke:0.2px #3f3f46;transform:scaleX(1.0914);transform-origin:0 50%;">Outlines</span>
<span class="t" style="left:51.00px;top:239px;font-size:12.49px;color:#3f3f46;-webkit-text-stroke:0.2px #3f3f46;transform:scaleX(1.1324);transform-origin:0 50%;">Traffic</span>
<span class="t" style="left:20.00px;top:286px;font-size:10.64px;color:#71717a;-webkit-text-stroke:0.15px #71717a;transform:scaleX(1.0675);transform-origin:0 50%;">Manage</span>
<span class="t" style="left:51.00px;top:312px;font-size:12.49px;color:#3f3f46;-webkit-text-stroke:0.2px #3f3f46;transform:scaleX(1.0919);transform-origin:0 50%;">Competitors</span>
<span class="t" style="left:51.00px;top:342px;font-size:12.49px;color:#3f3f46;-webkit-text-stroke:0.2px #3f3f46;transform:scaleX(1.0808);transform-origin:0 50%;">Brand Profile</span>
<span class="t" style="left:51.00px;top:373px;font-size:12.49px;color:#3f3f46;-webkit-text-stroke:0.2px #3f3f46;transform:scaleX(1.0667);transform-origin:0 50%;">Invite People</span>
<span class="t" style="left:35.00px;top:724px;font-size:12.49px;color:#372aac;-webkit-text-stroke:0.2px #372aac;transform:scaleX(1.0450);transform-origin:0 50%;">21-Day Market Share</span>
<span class="t" style="left:35.00px;top:742px;font-size:12.49px;color:#372aac;-webkit-text-stroke:0.2px #372aac;transform:scaleX(1.0669);transform-origin:0 50%;">Growth Plan:</span>
<span class="t" style="left:63.50px;top:767px;font-size:10.64px;color:#372aac;-webkit-text-stroke:0.2px #372aac;transform:scaleX(1.0134);transform-origin:0 50%;">Day One</span>
<span class="t" style="left:63.50px;top:781px;font-size:10.64px;color:#4a3fcf;transform:scaleX(1.0604);transform-origin:0 50%;">Complete Base Actions</span>
<span class="t" style="left:63.50px;top:814px;font-size:10.64px;color:#372aac;-webkit-text-stroke:0.2px #372aac;transform:scaleX(1.0297);transform-origin:0 50%;">Day Four</span>
<span class="t" style="left:63.50px;top:828px;font-size:10.64px;color:#4a3fcf;transform:scaleX(1.0295);transform-origin:0 50%;">Add Snipes to Queue</span>
<span class="t" style="left:35.60px;top:912px;font-size:11.84px;color:#52525b;-webkit-text-stroke:0.15px #52525b;transform:scaleX(0.8658);transform-origin:0 50%;">RD</span>
<span class="t" style="left:68.00px;top:911px;font-size:12.49px;color:#18181b;-webkit-text-stroke:0.2px #18181b;transform:scaleX(1.0911);transform-origin:0 50%;">Robert Smith</span>
<span class="t" style="left:302.00px;top:15px;font-size:13.88px;color:#18181b;-webkit-text-stroke:0.68px #18181b;transform:scaleX(1.1142);transform-origin:0 50%;">Olympus</span>
<span class="t" style="left:1363.00px;top:16px;font-size:10.64px;color:#3f3f46;-webkit-text-stroke:0.15px #3f3f46;transform:scaleX(1.0825);transform-origin:0 50%;">Prompt Type</span>
<span class="t" style="left:1439.00px;top:16px;font-size:10.64px;color:#4b38de;-webkit-text-stroke:0.45px #4b38de;transform:scaleX(1.1042);transform-origin:0 50%;">Discovery</span>
<span class="t" style="left:1553.00px;top:16px;font-size:10.64px;color:#3f3f46;-webkit-text-stroke:0.15px #3f3f46;transform:scaleX(1.0944);transform-origin:0 50%;">Models</span>
<span class="t" style="left:1602.50px;top:16px;font-size:10.64px;color:#4b38de;-webkit-text-stroke:0.45px #4b38de;transform:scaleX(1.1221);transform-origin:0 50%;">All Models</span>
<span class="t" style="left:339.00px;top:70px;font-size:12.49px;color:#27272a;-webkit-text-stroke:0.15px #27272a;transform:scaleX(1.0223);transform-origin:0 50%;">Mar 11, 2025 - Apr 21, 2025</span>
<span class="t" style="left:517.00px;top:70px;font-size:12.49px;color:#71717a;transform:scaleX(1.0806);transform-origin:0 50%;">compared to</span>
<span class="t" style="left:611.00px;top:70px;font-size:12.49px;color:#27272a;-webkit-text-stroke:0.15px #27272a;transform:scaleX(1.0480);transform-origin:0 50%;">No comparison</span>
<span class="t" style="left:318.00px;top:126px;font-size:12.03px;color:#52525b;transform:scaleX(1.0915);transform-origin:0 50%;">Attributed Mentions</span>
<span class="t" style="left:318.00px;top:152px;font-size:21.28px;color:#18181b;-webkit-text-stroke:0.78px #18181b;transform:scaleX(1.2118);transform-origin:0 50%;">600</span>
<span class="t" style="left:368.50px;top:155px;font-size:12.03px;color:#71717a;transform:scaleX(1.0323);transform-origin:0 50%;">(3.1% of responses)</span>
<span class="t" style="left:784.00px;top:126px;font-size:12.03px;color:#52525b;transform:scaleX(1.0535);transform-origin:0 50%;">Sources Tracked</span>
<span class="t" style="left:784.00px;top:152px;font-size:21.28px;color:#18181b;-webkit-text-stroke:0.78px #18181b;transform:scaleX(1.0571);transform-origin:0 50%;">40.1k</span>
<span class="t" style="left:1250.00px;top:126px;font-size:12.03px;color:#52525b;transform:scaleX(1.0515);transform-origin:0 50%;">Responses Analyzed</span>
<span class="t" style="left:1250.00px;top:152px;font-size:21.28px;color:#18181b;-webkit-text-stroke:0.78px #18181b;transform:scaleX(1.0378);transform-origin:0 50%;">19.6k</span>
<span class="t" style="left:318.00px;top:227px;font-size:12.03px;color:#52525b;transform:scaleX(1.0826);transform-origin:0 50%;">Top Cited Articles</span>
<span class="t" style="left:943.40px;top:227px;font-size:12.03px;color:#4a3fd0;transform:scaleX(1.0957);transform-origin:0 50%;">View</span>
<span class="t" style="left:318.00px;top:265px;font-size:12.03px;color:#3f3f46;transform:scaleX(1.1412);transform-origin:0 50%;">yourcompany.com/blog/top-rfp-software-in-2025-finding-your-perfect-match</span>
<span class="t" style="left:953.00px;top:264px;font-size:10.64px;color:#3f3f46;-webkit-text-stroke:0.45px #3f3f46;transform:scaleX(1.1413);transform-origin:0 50%;">98</span>
<span class="t" style="left:318.00px;top:293px;font-size:12.03px;color:#3f3f46;transform:scaleX(1.1226);transform-origin:0 50%;">yourcompany.com/blog/unlock-efficiency-how-rfp-management-software-transforms-proposals</span>
<span class="t" style="left:953.00px;top:293px;font-size:10.64px;color:#3f3f46;-webkit-text-stroke:0.45px #3f3f46;transform:scaleX(1.1413);transform-origin:0 50%;">47</span>
<span class="t" style="left:318.00px;top:322px;font-size:12.03px;color:#3f3f46;transform:scaleX(1.1195);transform-origin:0 50%;">yourcompany.com/blog/revolutionizing-rfp-management-with-ai-powered-solutions</span>
<span class="t" style="left:953.00px;top:322px;font-size:10.64px;color:#3f3f46;-webkit-text-stroke:0.45px #3f3f46;transform:scaleX(1.1413);transform-origin:0 50%;">35</span>
<span class="t" style="left:1017.00px;top:227px;font-size:12.03px;color:#52525b;transform:scaleX(1.0480);transform-origin:0 50%;">Top Sources</span>
<span class="t" style="left:1641.90px;top:227px;font-size:12.03px;color:#4a3fd0;transform:scaleX(1.0957);transform-origin:0 50%;">View</span>
<span class="t" style="left:1017.00px;top:265px;font-size:12.03px;color:#3f3f46;transform:scaleX(1.1397);transform-origin:0 50%;">clarity-ventures.com/ecommerce-integrations/rfp-tools</span>
<span class="t" style="left:1644.50px;top:264px;font-size:10.64px;color:#3f3f46;-webkit-text-stroke:0.45px #3f3f46;transform:scaleX(1.1559);transform-origin:0 50%;">525</span>
<span class="t" style="left:1017.00px;top:293px;font-size:12.03px;color:#3f3f46;transform:scaleX(1.1505);transform-origin:0 50%;">responsive.io/blog/best-rfp-software</span>
<span class="t" style="left:1645.50px;top:293px;font-size:10.64px;color:#3f3f46;-webkit-text-stroke:0.45px #3f3f46;transform:scaleX(1.0996);transform-origin:0 50%;">427</span>
<span class="t" style="left:1017.00px;top:322px;font-size:12.03px;color:#3f3f46;transform:scaleX(1.1659);transform-origin:0 50%;">visme.co/blog/rfp-software</span>
<span class="t" style="left:1643.50px;top:322px;font-size:10.64px;color:#3f3f46;-webkit-text-stroke:0.45px #3f3f46;transform:scaleX(1.2123);transform-origin:0 50%;">350</span>
<span class="t" style="left:302.00px;top:393px;font-size:12.03px;color:#18181b;-webkit-text-stroke:0.6px #18181b;transform:scaleX(1.1643);transform-origin:0 50%;">Brand Mentions</span>
<span class="t" style="left:916.00px;top:393px;font-size:10.18px;color:#71717a;transform:scaleX(1.1193);transform-origin:0 50%;">Full Scale</span>
<span class="t" style="left:302.00px;top:423px;font-size:18.04px;color:#18181b;transform:scaleX(0.8408);transform-origin:0 50%;">14.1%</span>
<span class="t" style="left:349.00px;top:426px;font-size:10.18px;color:#a1a1aa;transform:scaleX(1.0608);transform-origin:0 50%;">average</span>
<span class="t" style="left:302.00px;top:447px;font-size:12.03px;color:#71717a;transform:scaleX(1.0983);transform-origin:0 50%;">1248 mentions / 8853 responses</span>
<span class="t" style="left:302.50px;top:710px;font-size:10.18px;color:#71717a;transform:scaleX(1.0987);transform-origin:0 50%;">View more details</span>
<span class="t" style="left:791.30px;top:482px;font-size:10.18px;color:#3f3f46;transform:scaleX(1.1143);transform-origin:0 50%;">Mentions</span>
<span class="t" style="left:870.00px;top:482px;font-size:10.18px;color:#3f3f46;transform:scaleX(1.0993);transform-origin:0 50%;">Previous Mentions</span>
<span class="t" style="left:313.00px;top:507px;font-size:10.18px;color:#71717a;transform:scaleX(1.1051);transform-origin:0 50%;">40%</span>
<span class="t" style="left:313.00px;top:545px;font-size:10.18px;color:#71717a;transform:scaleX(1.1051);transform-origin:0 50%;">30%</span>
<span class="t" style="left:313.00px;top:584px;font-size:10.18px;color:#71717a;transform:scaleX(1.1051);transform-origin:0 50%;">20%</span>
<span class="t" style="left:315.00px;top:622px;font-size:10.18px;color:#71717a;transform:scaleX(1.0069);transform-origin:0 50%;">10%</span>
<span class="t" style="left:333.55px;top:676px;font-size:11.1px;color:#71717a;transform:scaleX(1.0694);transform-origin:0 50%;">03/11/2025</span>
<span class="t" style="left:459.77px;top:676px;font-size:11.1px;color:#71717a;transform:scaleX(1.1525);transform-origin:0 50%;">03/20/2025</span>
<span class="t" style="left:588.89px;top:676px;font-size:11.1px;color:#71717a;transform:scaleX(1.1471);transform-origin:0 50%;">03/29/2025</span>
<span class="t" style="left:717.56px;top:676px;font-size:11.1px;color:#71717a;transform:scaleX(1.1579);transform-origin:0 50%;">04/07/2025</span>
<span class="t" style="left:847.68px;top:676px;font-size:11.1px;color:#71717a;transform:scaleX(1.1165);transform-origin:0 50%;">04/16/2025</span>
<span class="t" style="left:1019.00px;top:393px;font-size:12.03px;color:#18181b;-webkit-text-stroke:0.6px #18181b;transform:scaleX(1.1817);transform-origin:0 50%;">Competitor Mentions</span>
<span class="t" style="left:1633.00px;top:393px;font-size:10.18px;color:#71717a;transform:scaleX(1.1193);transform-origin:0 50%;">Full Scale</span>
<span class="t" style="left:1019.00px;top:423px;font-size:18.04px;color:#18181b;transform:scaleX(0.8408);transform-origin:0 50%;">19.1%</span>
<span class="t" style="left:1066.00px;top:426px;font-size:10.18px;color:#a1a1aa;transform:scaleX(1.0608);transform-origin:0 50%;">average</span>
<span class="t" style="left:1019.00px;top:447px;font-size:12.03px;color:#71717a;transform:scaleX(1.0937);transform-origin:0 50%;">15102 mentions / 8853 responses</span>
<span class="t" style="left:1019.50px;top:710px;font-size:10.18px;color:#71717a;transform:scaleX(1.0987);transform-origin:0 50%;">View more details</span>
<span class="t" style="left:1059.00px;top:482px;font-size:10.18px;color:#3f3f46;transform:scaleX(1.0217);transform-origin:0 50%;">Loopio (72.1%)</span>
<span class="t" style="left:1161.00px;top:482px;font-size:10.18px;color:#3f3f46;transform:scaleX(1.0602);transform-origin:0 50%;">Responsive.io (35.5%)</span>
<span class="t" style="left:1301.00px;top:482px;font-size:10.18px;color:#3f3f46;transform:scaleX(1.0557);transform-origin:0 50%;">Qvidian (28.3%)</span>
<span class="t" style="left:1410.20px;top:482px;font-size:10.18px;color:#3f3f46;transform:scaleX(1.0625);transform-origin:0 50%;">RFP360 (20.8%)</span>
<span class="t" style="left:1523.00px;top:482px;font-size:10.18px;color:#3f3f46;transform:scaleX(1.0450);transform-origin:0 50%;">Arphie (4.6%)</span>
<span class="t" style="left:1620.00px;top:482px;font-size:10.18px;color:#3f3f46;transform:scaleX(0.9707);transform-origin:0 50%;">1up (3</span>
<span class="t" style="left:1025.00px;top:507px;font-size:10.18px;color:#71717a;transform:scaleX(1.0564);transform-origin:0 50%;">100%</span>
<span class="t" style="left:1031.00px;top:545px;font-size:10.18px;color:#71717a;transform:scaleX(1.0560);transform-origin:0 50%;">75%</span>
<span class="t" style="left:1030.50px;top:584px;font-size:10.18px;color:#71717a;transform:scaleX(1.0806);transform-origin:0 50%;">50%</span>
<span class="t" style="left:1031.00px;top:622px;font-size:10.18px;color:#71717a;transform:scaleX(1.0560);transform-origin:0 50%;">25%</span>
<span class="t" style="left:1051.05px;top:676px;font-size:11.1px;color:#71717a;transform:scaleX(1.0694);transform-origin:0 50%;">03/11/2025</span>
<span class="t" style="left:1177.27px;top:676px;font-size:11.1px;color:#71717a;transform:scaleX(1.1525);transform-origin:0 50%;">03/20/2025</span>
<span class="t" style="left:1306.39px;top:676px;font-size:11.1px;color:#71717a;transform:scaleX(1.1471);transform-origin:0 50%;">03/29/2025</span>
<span class="t" style="left:1435.06px;top:676px;font-size:11.1px;color:#71717a;transform:scaleX(1.1579);transform-origin:0 50%;">04/07/2025</span>
<span class="t" style="left:1565.18px;top:676px;font-size:11.1px;color:#71717a;transform:scaleX(1.1165);transform-origin:0 50%;">04/16/2025</span>
<span class="t" style="left:302.00px;top:800px;font-size:12.03px;color:#18181b;-webkit-text-stroke:0.6px #18181b;transform:scaleX(1.1085);transform-origin:0 50%;">Overall GEO Score</span>
<span class="t" style="left:302.50px;top:829px;font-size:18.04px;color:#18181b;transform:scaleX(0.9093);transform-origin:0 50%;">10.2%</span>
<span class="t" style="left:357.00px;top:831px;font-size:12.03px;color:#71717a;transform:scaleX(1.1070);transform-origin:0 50%;">weighted visibility score</span>
<span class="t" style="left:302.00px;top:865px;font-size:12.49px;color:#18181b;transform:scaleX(1.0626);transform-origin:0 50%;">Brand Mention Rate</span>
<span class="t" style="left:910.50px;top:865px;font-size:12.03px;color:#18181b;-webkit-text-stroke:0.45px #18181b;transform:scaleX(0.8978);transform-origin:0 50%;">14.1</span>
<span class="t" style="left:932.00px;top:865px;font-size:12.03px;color:#71717a;transform:scaleX(1.0857);transform-origin:0 50%;">/100%</span>
<span class="t" style="left:302.00px;top:914px;font-size:12.49px;color:#18181b;transform:scaleX(1.0547);transform-origin:0 50%;">Overall Presence</span>
<span class="t" style="left:913.00px;top:914px;font-size:12.03px;color:#18181b;-webkit-text-stroke:0.45px #18181b;transform:scaleX(1.1065);transform-origin:0 50%;">6.4</span>
<span class="t" style="left:932.00px;top:914px;font-size:12.03px;color:#71717a;transform:scaleX(1.0857);transform-origin:0 50%;">/100%</span>
<span class="t" style="left:1019.00px;top:800px;font-size:12.03px;color:#18181b;-webkit-text-stroke:0.6px #18181b;transform:scaleX(1.1788);transform-origin:0 50%;">Brand Mentions Distribution</span>
<span class="t" style="left:1019.50px;top:829px;font-size:18.04px;color:#18181b;transform:scaleX(1.0966);transform-origin:0 50%;">8853</span>
<span class="t" style="left:1071.00px;top:831px;font-size:12.03px;color:#71717a;transform:scaleX(1.1161);transform-origin:0 50%;">total mentions</span>
<span class="t" style="left:1019.00px;top:865px;font-size:12.49px;color:#18181b;transform:scaleX(1.0654);transform-origin:0 50%;">Current Period</span>
<span class="t" style="left:1035.50px;top:913px;font-size:10.18px;color:#3f3f46;transform:scaleX(1.1018);transform-origin:0 50%;">Brand Mentions</span>
<span class="t" style="left:1121.50px;top:913px;font-size:10.18px;color:#52525b;transform:scaleX(0.9965);transform-origin:0 50%;">(1248 / 14.1%)</span>
<span class="t" style="left:1035.50px;top:934px;font-size:10.18px;color:#3f3f46;transform:scaleX(1.1187);transform-origin:0 50%;">Competitor Mentions</span>
<span class="t" style="left:1148.00px;top:934px;font-size:10.18px;color:#52525b;transform:scaleX(1.1164);transform-origin:0 50%;">(7605 / 85.9%)</span>
</body></html>
